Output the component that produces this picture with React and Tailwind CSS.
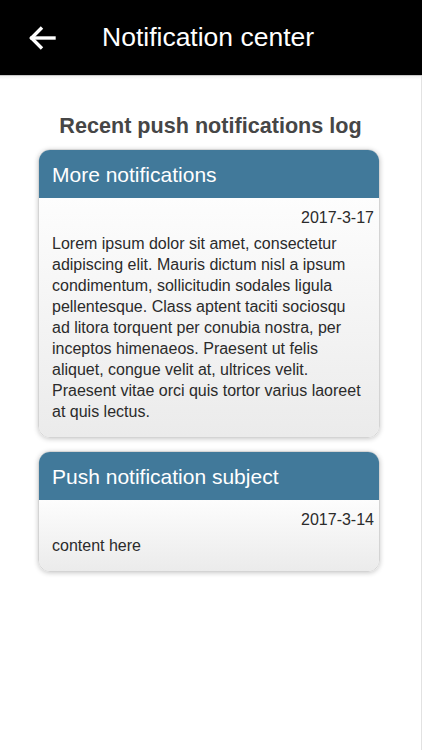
import React from "react";

const notifications = [
  {
    subject: "More notifications",
    date: "2017-3-17",
    body:
      "Lorem ipsum dolor sit amet, consectetur adipiscing elit. Mauris dictum nisl a ipsum condimentum, sollicitudin sodales ligula pellentesque. Class aptent taciti sociosqu ad litora torquent per conubia nostra, per inceptos himenaeos. Praesent ut felis aliquet, congue velit at, ultrices velit. Praesent vitae orci quis tortor varius laoreet at quis lectus.",
  },
  {
    subject: "Push notification subject",
    date: "2017-3-14",
    body: "content here",
  },
];

function BackArrow() {
  return (
    <svg width="28" height="28" viewBox="0 0 28 28" fill="none" stroke="white" strokeWidth="3.4" strokeLinecap="square">
      <path d="M26 14H4" />
      <path d="M14 3.5L3.5 14L14 24.5" strokeLinecap="butt" strokeLinejoin="miter" />
    </svg>
  );
}

function Card({ subject, date, body }) {
  return (
    <div className="rounded-[12px] overflow-hidden border border-[#d4d4d4] shadow-[0_1px_5px_rgba(0,0,0,0.22)]">
      <div className="h-[48px] bg-[#41799a] flex items-center px-[13px] text-white text-[21px] leading-none">
        {subject}
      </div>
      <div className="bg-gradient-to-b from-[#fdfdfd] to-[#ebebeb] pl-[13px] pr-[5px] pt-[9px] pb-[15px] text-[#2b2b2b] text-[16px] leading-[21px]">
        <div className="text-right">{date}</div>
        <p className="mt-[5px] pr-[10px]">{body}</p>
      </div>
    </div>
  );
}

export default function App() {
  return (
    <div className="w-[422px] h-[750px] bg-white flex flex-col" style={{ fontFamily: '"Liberation Sans", Arial, sans-serif' }}>
      <header className="h-[76px] bg-black border-b border-[#c8c8c8] flex items-center shrink-0">
        <div className="w-[102px] pl-[28px] pt-[1px] flex items-center">
          <BackArrow />
        </div>
        <h1 className="text-white text-[26.5px] leading-none">Notification center</h1>
      </header>
      <main className="flex-1 border-r border-[#e2e2e2] bg-gradient-to-b from-[#f2f2f2] via-white to-white bg-[length:100%_8px] bg-no-repeat">
        <h2 className="text-center font-bold text-[21.6px] leading-[25px] text-[#464646] mt-[37px] mb-[11px]">
          Recent push notifications log
        </h2>
        <div className="ml-[38px] w-[342px] flex flex-col gap-[13px]">
          {notifications.map((n) => (
            <Card key={n.subject} {...n} />
          ))}
        </div>
      </main>
    </div>
  );
}
